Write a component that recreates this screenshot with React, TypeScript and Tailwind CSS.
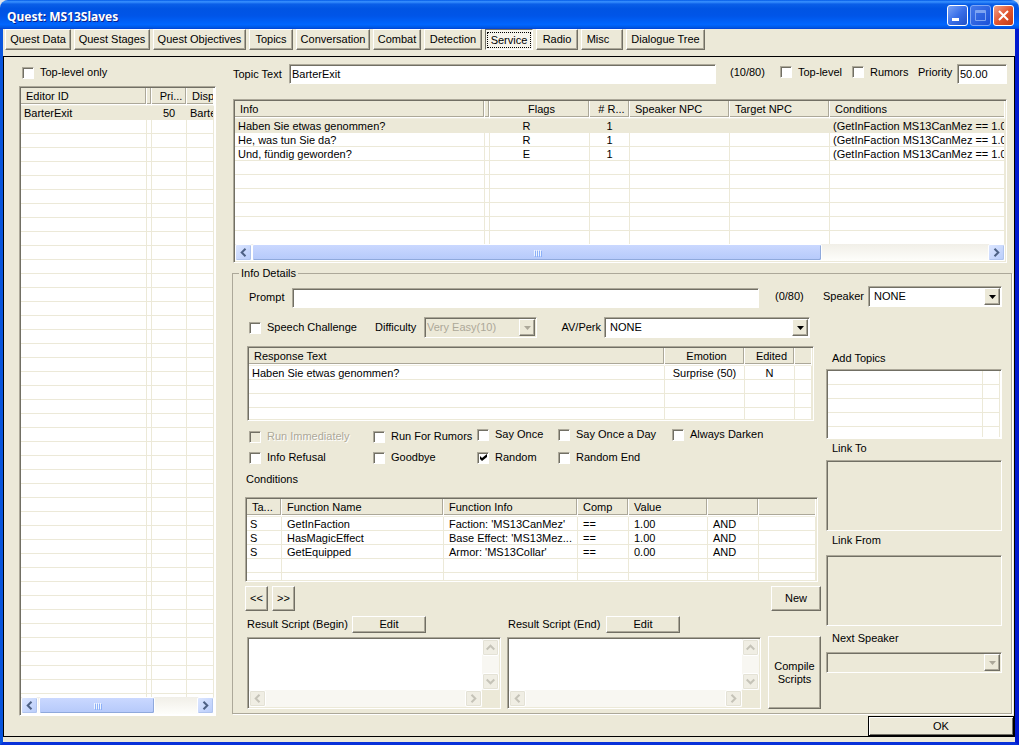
import React, { useState } from 'react';
import clsx from 'clsx';

interface IColumn {
  title: string;
  width: string;
  align?: string;
}

interface IListView {
  label: string;
  columns: IColumn[];
  rows: string[][];
  emptyRows: number;
  filler: string;
  selected?: number;
  hideHeader?: boolean;
  cellStyles?: string[];
}

const sunken =
  'border border-t-[#aca899] border-l-[#aca899] border-b-white border-r-white shadow-[inset_1px_1px_0_#716f64]';
const raised =
  'border border-t-white border-l-white border-b-[#716f64] border-r-[#716f64] shadow-[inset_-1px_-1px_0_#aca899] bg-[#ece9d8]';

const tabs = [
  { name: 'Quest Data', width: 'w-[66px]' },
  { name: 'Quest Stages', width: 'w-[76px]' },
  { name: 'Quest Objectives', width: 'w-[93px]' },
  { name: 'Topics', width: 'w-[44px]' },
  { name: 'Conversation', width: 'w-[74px]' },
  { name: 'Combat', width: 'w-[48px]' },
  { name: 'Detection', width: 'w-[58px]' },
  { name: 'Service', width: 'w-[48px]' },
  { name: 'Radio', width: 'w-[42px]' },
  { name: 'Misc', width: 'w-[42px] pr-2' },
  { name: 'Dialogue Tree', width: 'w-[79px]' }
];

const topicColumns: IColumn[] = [
  { title: 'Editor ID', width: 'w-[126px]' },
  { title: '', width: 'w-[5px]' },
  { title: 'Pri...', width: 'w-[35px]', align: 'text-center' },
  { title: 'Disp', width: 'w-auto' }
];

const infoColumns: IColumn[] = [
  { title: 'Info', width: 'w-[250px]' },
  { title: '', width: 'w-[5px]' },
  { title: 'Flags', width: 'w-[100px]', align: 'text-center' },
  { title: '# R...', width: 'w-[40px]', align: 'text-center' },
  { title: 'Speaker NPC', width: 'w-[100px]' },
  { title: 'Target NPC', width: 'w-[100px]' },
  { title: 'Conditions', width: 'w-auto' }
];

const infoCondition = '(GetInFaction MS13CanMez == 1.0';
const infoRows = [
  ['Haben Sie etwas genommen?', '', 'R', '1', '', '', infoCondition],
  ['He, was tun Sie da?', '', 'R', '1', '', '', infoCondition],
  ['Und, fündig geworden?', '', 'E', '1', '', '', infoCondition]
];

const responseColumns: IColumn[] = [
  { title: 'Response Text', width: 'w-auto' },
  { title: 'Emotion', width: 'w-[80px]', align: 'text-center' },
  { title: 'Edited', width: 'w-[50px]', align: 'text-center' },
  { title: '', width: 'w-[17px]' }
];

const conditionColumns: IColumn[] = [
  { title: 'Ta...', width: 'w-[35px]' },
  { title: 'Function Name', width: 'w-[162px]' },
  { title: 'Function Info', width: 'w-[134px]' },
  { title: 'Comp', width: 'w-[51px]' },
  { title: 'Value', width: 'w-[79px]' },
  { title: '', width: 'w-[51px]' },
  { title: '', width: 'w-auto' }
];

const conditionRows = [
  ['S', 'GetInFaction', "Faction: 'MS13CanMez'", '==', '1.00', 'AND', ''],
  ['S', 'HasMagicEffect', "Base Effect: 'MS13Mez...", '==', '1.00', 'AND', ''],
  ['S', 'GetEquipped', "Armor: 'MS13Collar'", '==', '0.00', 'AND', '']
];

const ListView = ({
  label,
  columns,
  rows,
  emptyRows,
  filler,
  selected,
  hideHeader,
  cellStyles = []
}: IListView) => {
  const blank = columns.map(() => '');
  const allRows = [...rows, ...Array.from({ length: emptyRows }, () => blank)];

  return (
    <table
      aria-label={label}
      className="w-full table-fixed border-separate border-spacing-0 bg-white"
    >
      <colgroup>
        {columns.map((col, index) => (
          <col key={index} className={col.width} />
        ))}
      </colgroup>
      {!hideHeader && (
        <thead>
          <tr>
            {columns.map((col, index) => (
              <th
                key={index}
                className="h-[18px] border-b border-r border-b-[#f1efe2] border-r-white p-0 pb-px align-top font-normal"
              >
                <div
                  className={clsx(
                    'h-4 overflow-hidden whitespace-nowrap border-b border-[#aca899] bg-[#ece9d8] leading-4',
                    index < columns.length - 1 && 'border-r',
                    col.title && 'pl-[5px]',
                    col.align || 'text-left'
                  )}
                >
                  {col.title}
                </div>
              </th>
            ))}
          </tr>
        </thead>
      )}
      <tbody>
        {allRows.map((row, rowIndex) => (
          <tr
            key={rowIndex}
            className={clsx(rowIndex === selected && 'bg-[#ece9d8]')}
          >
            {row.map((cell, index) => (
              <td
                key={index}
                className="h-[14px] border-b border-r border-[#ece9d8] p-0"
              >
                <div
                  className={clsx(
                    'h-[13px] overflow-hidden whitespace-nowrap leading-[15px]',
                    columns[index].align,
                    cellStyles[index] ||
                      (!columns[index].align &&
                        (index === 0 ? 'pl-[3px]' : 'pl-[5px]'))
                  )}
                >
                  {cell}
                </div>
              </td>
            ))}
          </tr>
        ))}
        <tr>
          {columns.map((col, index) => (
            <td
              key={index}
              className={clsx('border-r border-[#ece9d8] p-0', filler)}
            />
          ))}
        </tr>
      </tbody>
    </table>
  );
};

const Chevron = ({ rotate = '', muted }: { rotate?: string; muted?: boolean }) => (
  <svg
    viewBox="0 0 9 9"
    className={clsx('size-[9px]', rotate)}
    fill="none"
    stroke={muted ? '#c5c3b8' : '#4d6185'}
    strokeWidth="2"
  >
    <path d="M6.5 .7 2.7 4.5 6.5 8.3" />
  </svg>
);

const ScrollButton = ({
  name,
  rotate,
  muted
}: {
  name: string;
  rotate?: string;
  muted?: boolean;
}) => (
  <button
    aria-label={name}
    disabled={muted}
    className={clsx(
      'flex size-[17px] shrink-0 items-center justify-center rounded-xs border border-white',
      muted
        ? 'bg-[#f0eee4] shadow-[inset_0_0_0_1px_#e4e2d6]'
        : 'bg-linear-to-br from-[#dce6ff] to-[#b8ccfa] shadow-[inset_-1px_-1px_0_#b0c4ee]'
    )}
  >
    <Chevron rotate={rotate} muted={muted} />
  </button>
);

const Scrollbar = ({ thumb }: { thumb: string }) => (
  <div className="flex h-[17px] bg-linear-to-b from-[#f1efe8] to-[#fefefb]">
    <ScrollButton name="Scroll left" />
    <div className="min-w-0 flex-1">
      <div
        className={clsx(
          'flex h-[17px] items-center justify-center gap-px rounded-xs border border-white bg-linear-to-b from-[#cad8ff] to-[#b5c9fa] shadow-[inset_-1px_-1px_0_#8fa9dc]',
          thumb
        )}
      >
        {[0, 1, 2, 3].map((line) => (
          <span
            key={line}
            className="h-[6px] w-px bg-[#eef4fe] shadow-[1px_1px_0_#8cb0f8]"
          />
        ))}
      </div>
    </div>
    <ScrollButton name="Scroll right" rotate="rotate-180" />
  </div>
);

const Checkbox = ({
  label,
  checked = false,
  disabled
}: {
  label: string;
  checked?: boolean;
  disabled?: boolean;
}) => {
  const [isChecked, setIsChecked] = useState(checked);

  return (
    <label
      className={clsx(
        'flex h-[13px] items-center gap-[6px] whitespace-nowrap',
        disabled && 'text-[#aca899] [text-shadow:1px_1px_0_white]'
      )}
    >
      <span className="relative size-[12px]">
        <input
          type="checkbox"
          checked={isChecked}
          disabled={disabled}
          onChange={() => setIsChecked(!isChecked)}
          className={clsx(
            'block size-[12px] appearance-none',
            sunken,
            disabled ? 'bg-[#ece9d8]' : 'bg-white'
          )}
        />
        {isChecked && (
          <svg
            viewBox="0 0 7 7"
            className="pointer-events-none absolute left-[3px] top-[2px] size-[7px]"
          >
            <path d="M0 2 2 4 7 0V3L2 7 0 5Z" />
          </svg>
        )}
      </span>
      {label}
    </label>
  );
};

const Dropdown = ({
  id,
  value,
  width,
  disabled
}: {
  id: string;
  value: string;
  width: string;
  disabled?: boolean;
}) => (
  <div className={clsx('relative h-[21px]', width)}>
    <select
      id={id}
      disabled={disabled}
      className={clsx(
        'block h-[21px] w-full appearance-none pr-5 leading-[17px] opacity-100',
        sunken,
        disabled ? 'bg-[#ece9d8] pl-[2px] text-[#aca899]' : 'bg-white pl-[5px]'
      )}
    >
      <option>{value}</option>
    </select>
    <span
      className={clsx(
        'pointer-events-none absolute right-[2px] top-[2px] flex h-[17px] w-4 items-center justify-center',
        raised
      )}
    >
      <svg
        viewBox="0 0 7 4"
        className="h-[4px] w-[7px]"
        fill={disabled ? '#aca899' : 'black'}
      >
        <path d="M0 0H7L3.5 4Z" />
      </svg>
    </span>
  </div>
);

const ScriptBox = ({
  id,
  label,
  headStyle
}: {
  id: string;
  label: string;
  headStyle: string;
}) => (
  <div className="w-[254px]">
    <div className={clsx('flex h-[17px] items-center justify-between', headStyle)}>
      <label htmlFor={id}>{label}</label>
      <button className={clsx('h-[17px] w-[74px] leading-[13px]', raised)}>Edit</button>
    </div>
    <div
      className={clsx(
        'mt-1 grid h-[72px] grid-cols-[1fr_17px] grid-rows-[1fr_17px] bg-[#ece9d8] p-px',
        sunken
      )}
    >
      <textarea id={id} className="block resize-none bg-white" />
      <div className="flex flex-col justify-between bg-[#f8f7f2]">
        <ScrollButton name="Scroll up" rotate="rotate-90" muted />
        <ScrollButton name="Scroll down" rotate="-rotate-90" muted />
      </div>
      <div className="flex justify-between bg-[#f8f7f2]">
        <ScrollButton name="Scroll left" muted />
        <ScrollButton name="Scroll right" rotate="rotate-180" muted />
      </div>
    </div>
  </div>
);

const TitleBar = () => (
  <div className="flex h-[29px] items-center justify-between rounded-t-lg bg-[linear-gradient(to_bottom,#0058e6_0%,#3a92ff_6%,#0a5fe8_14%,#0054e3_30%,#0055e8_55%,#0066ff_85%,#0055e0_96%,#003dd7_100%)] pl-[7px] pr-[5px]">
    <h1 className="pt-[3px] font-['Noto_Sans'] text-[12px] font-bold text-white [text-shadow:1px_1px_0_#0a1f8c]">
      Quest: MS13Slaves
    </h1>
    <div className="flex gap-[2px] pt-[2px]">
      <button
        aria-label="Minimize"
        className="size-[21px] rounded-[3px] border border-white bg-linear-to-br from-[#7ba2f5] via-[#3a6fe8] to-[#1f50c8]"
      >
        <svg viewBox="0 0 19 19" className="size-[19px]">
          <path d="M4 12H11V15H4Z" fill="white" />
        </svg>
      </button>
      <button
        aria-label="Maximize"
        disabled
        className="size-[21px] rounded-[3px] border border-[#7fa6f5] bg-linear-to-br from-[#4478ea] to-[#1a50d8]"
      >
        <svg viewBox="0 0 19 19" className="size-[19px]" fill="none" stroke="#7ea4f2">
          <path d="M4.5 4.5H14.5V14.5H4.5ZM4 5.5H15M4 6.5H15" />
        </svg>
      </button>
      <button
        aria-label="Close"
        className="size-[21px] rounded-[3px] border border-white bg-linear-to-br from-[#f0a088] via-[#e2562f] to-[#c33a12]"
      >
        <svg viewBox="0 0 19 19" className="size-[19px]" stroke="white" strokeWidth="2">
          <path d="M5 5 14 14M14 5 5 14" />
        </svg>
      </button>
    </div>
  </div>
);

const InfoDetails = () => (
  <fieldset className="mt-1 border border-[#aca899] pb-1 pl-3 pr-[9px] shadow-[1px_1px_0_white]">
    <legend className="-ml-[6px] h-[13px] px-[2px]">Info Details</legend>
    <div className="flex h-7 items-end pl-1">
      <label htmlFor="prompt" className="w-[43px] pb-1">
        Prompt
      </label>
      <input
        id="prompt"
        className={clsx('h-5 min-w-0 flex-1 bg-white px-[3px]', sunken)}
      />
      <span className="w-16 pb-[5px] pl-4">(0/80)</span>
      <label htmlFor="speaker" className="w-[45px] pb-[5px]">
        Speaker
      </label>
      <div className="pb-px">
        <Dropdown id="speaker" value="NONE" width="w-[134px]" />
      </div>
    </div>
    <div className="mt-[9px] flex gap-1">
      <div className="min-w-0 flex-1">
        <div className="flex h-[21px] items-center pl-1">
          <div className="w-[126px]">
            <Checkbox label="Speech Challenge" />
          </div>
          <label htmlFor="difficulty" className="w-[49px]">
            Difficulty
          </label>
          <Dropdown
            id="difficulty"
            value="Very Easy(10)"
            width="w-[113px]"
            disabled
          />
          <label htmlFor="av-perk" className="w-[67px] pr-[3px] text-right">
            AV/Perk
          </label>
          <Dropdown id="av-perk" value="NONE" width="w-[206px]" />
        </div>
        <div className={clsx('ml-[2px] mr-[7px] mt-2 p-px', sunken)}>
          <ListView
            label="Responses"
            columns={responseColumns}
            rows={[['Haben Sie etwas genommen?', 'Surprise (50)', 'N', '']]}
            emptyRows={2}
            filler="h-[11px]"
          />
        </div>
        <div className="mt-[7px] flex pl-1">
          <div className="flex w-[124px] flex-col gap-2 pt-[2px]">
            <Checkbox label="Run Immediately" disabled />
            <Checkbox label="Info Refusal" />
          </div>
          <div className="flex w-[104px] flex-col gap-2 pt-[2px]">
            <Checkbox label="Run For Rumors" />
            <Checkbox label="Goodbye" />
          </div>
          <div className="flex w-[81px] flex-col gap-[10px]">
            <Checkbox label="Say Once" />
            <Checkbox label="Random" checked />
          </div>
          <div className="flex w-[114px] flex-col gap-[10px]">
            <Checkbox label="Say Once a Day" />
            <Checkbox label="Random End" />
          </div>
          <Checkbox label="Always Darken" />
        </div>
        <h2 className="mt-[9px] pl-px">Conditions</h2>
        <div className={clsx('mr-[3px] mt-[11px] p-px', sunken)}>
          <ListView
            label="Conditions"
            columns={conditionColumns}
            rows={conditionRows}
            emptyRows={1}
            filler="h-[7px]"
          />
        </div>
        <div className="mt-1 flex gap-1">
          <button className={clsx('h-[25px] w-[23px]', raised)}>&lt;&lt;</button>
          <button className={clsx('h-[25px] w-[23px]', raised)}>&gt;&gt;</button>
          <button className={clsx('ml-auto h-[25px] w-[50px]', raised)}>New</button>
        </div>
        <div className="mt-[5px] flex items-end gap-[6px] pl-[2px]">
          <ScriptBox
            id="script-begin"
            label="Result Script (Begin)"
            headStyle="pr-[75px]"
          />
          <ScriptBox
            id="script-end"
            label="Result Script (End)"
            headStyle="pl-px pr-[81px]"
          />
          <button className={clsx('ml-auto h-[73px] w-[53px]', raised)}>
            Compile Scripts
          </button>
        </div>
      </div>
      <div className="w-[177px] pl-px pt-[35px]">
        <h2 className="pl-[6px]">Add Topics</h2>
        <div className={clsx('mt-1 h-[70px] overflow-hidden bg-white p-px', sunken)}>
          <ListView
            label="Add Topics"
            columns={[
              { title: '', width: 'w-auto' },
              { title: '', width: 'w-[17px]' }
            ]}
            rows={[]}
            emptyRows={4}
            filler="h-[10px]"
            hideHeader
          />
        </div>
        <h2 className="mt-[3px] pl-[6px]">Link To</h2>
        <div className={clsx('mt-[5px] h-[71px]', sunken)} />
        <h2 className="mt-[3px] pl-[6px]">Link From</h2>
        <div className={clsx('mt-2 h-[71px]', sunken)} />
        <label htmlFor="next-speaker" className="mb-[7px] mt-[6px] block pl-[6px]">
          Next Speaker
        </label>
        <Dropdown id="next-speaker" value="" width="w-full" disabled />
      </div>
    </div>
  </fieldset>
);

const App = () => {
  const [activeTab, setActiveTab] = useState('Service');

  return (
    <div className="flex min-h-screen flex-col bg-[#dfe3ea] font-['Liberation_Sans',sans-serif] text-[11px] leading-[13px] text-black">
      <TitleBar />
      <div className="flex flex-1 flex-col border-b-[3px] border-l-[3px] border-r-4 border-b-[#0831d9] border-l-[#0855dd] border-r-[#0019cf] bg-[#ece9d8]">
        <nav className="flex h-[27px] gap-[3px] pl-[2px]">
          {tabs.map(({ name, width }) => (
            <button
              key={name}
              onClick={() => setActiveTab(name)}
              className={clsx(
                'h-[21px] whitespace-nowrap',
                width,
                name === activeTab
                  ? 'border border-b-white border-l-[#716f64] border-r-white border-t-[#716f64] bg-[#f6f4ec] p-px'
                  : raised
              )}
            >
              {name === activeTab ? (
                <span className="block border border-dotted border-black pt-px">
                  {name}
                </span>
              ) : (
                name
              )}
            </button>
          ))}
        </nav>
        <main className="flex flex-1 flex-col border border-black pt-[7px]">
          <div className="flex flex-1 gap-4 pl-[15px] pr-[2px]">
            <aside className="flex w-[197px] shrink-0 flex-col">
              <div className="h-[22px] pl-[3px] pt-[2px]">
                <Checkbox label="Top-level only" />
              </div>
              <div className={clsx('flex-1 bg-white p-px', sunken)}>
                <ListView
                  label="Topics"
                  columns={topicColumns}
                  rows={[['BarterExit', '', '50', 'Barte']]}
                  emptyRows={41}
                  filler="h-[3px]"
                  selected={0}
                  cellStyles={['', '', '', 'pl-[3px]']}
                />
                <Scrollbar thumb="ml-px w-[116px]" />
              </div>
            </aside>
            <section className="min-w-0 flex-1">
              <div className="flex h-5 items-center pl-px pr-[5px]">
                <label htmlFor="topic-text" className="w-14">
                  Topic Text
                </label>
                <input
                  id="topic-text"
                  defaultValue="BarterExit"
                  className={clsx('h-5 min-w-0 flex-1 bg-white px-[2px]', sunken)}
                />
                <span className="w-16 pb-1 pl-[14px]">(10/80)</span>
                <div className="w-[72px] pb-1">
                  <Checkbox label="Top-level" />
                </div>
                <div className="w-[66px] pb-1">
                  <Checkbox label="Rumors" />
                </div>
                <label htmlFor="priority" className="w-[39px] pb-1">
                  Priority
                </label>
                <input
                  id="priority"
                  defaultValue="50.00"
                  className={clsx('h-5 w-[50px] bg-white px-[2px]', sunken)}
                />
              </div>
              <div className={clsx('ml-px mr-[5px] mt-[15px] p-px', sunken)}>
                <ListView
                  label="Infos"
                  columns={infoColumns}
                  rows={infoRows}
                  emptyRows={5}
                  filler="h-[13px]"
                  selected={0}
                  cellStyles={['', '', 'pr-[26px]', '', '', '', 'pl-[3px]']}
                />
                <Scrollbar thumb="w-[570px]" />
              </div>
              <InfoDetails />
            </section>
          </div>
          <button className="h-5 w-[146px] self-end border border-black bg-[#ece9d8] leading-4 shadow-[inset_1px_1px_0_white,inset_-1px_-1px_0_#716f64]">
            OK
          </button>
        </main>
        <div className="h-[5px]" />
      </div>
    </div>
  );
};

export default App;
